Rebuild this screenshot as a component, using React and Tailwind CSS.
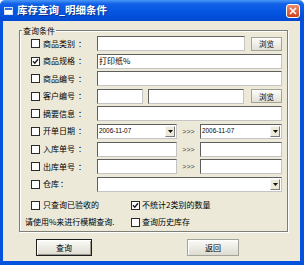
import React from 'react'

function Check({ checked }) {
  return (
    <span className="w-[9px] h-[9px] shrink-0 border border-[#2a2a2a] bg-white flex items-center justify-center">
      {checked && (
        <svg width="7" height="7" viewBox="0 0 7 7">
          <path d="M1 3.2 L2.8 5.2 L6 1.2" stroke="#1a1a1a" strokeWidth="1.4" fill="none" />
        </svg>
      )}
    </span>
  )
}

function Field({ w, text, mono, select }) {
  return (
    <div
      className={`${w} h-[15px] shrink-0 bg-white border border-[#5f5f5f] border-b-[#c4c4c4] border-r-[#c4c4c4] flex items-center pl-[1px] pr-[1px] overflow-hidden`}
    >
      <span
        className={
          mono
            ? "font-['Liberation_Sans',sans-serif] text-[6.4px] leading-none"
            : 'text-[8px] leading-none'
        }
      >
        {text}
      </span>
      {select && (
        <span className="ml-auto w-[10px] h-[11px] bg-[#ece9d8] border border-[#f8f8f8] border-b-[#7a7a7a] border-r-[#7a7a7a] flex items-center justify-center">
          <svg width="5" height="3" viewBox="0 0 5 3">
            <path d="M0 0 H5 L2.5 3 Z" fill="#111" />
          </svg>
        </span>
      )}
    </div>
  )
}

function Browse() {
  return (
    <button className="ml-auto w-[31px] h-[14px] border border-[#a3a39a] bg-gradient-to-b from-[#fdfdfb] to-[#e2e0d5] text-[7.5px] leading-none flex items-center justify-center">
      浏览
    </button>
  )
}

function Row({ label, checked, colon = 'ml-[3px]', children }) {
  return (
    <div className="h-[15px] flex items-center">
      <Check checked={checked} />
      <span className="ml-[3px] w-[54px] shrink-0 flex items-center whitespace-nowrap text-[8px] leading-none">
        {label}
        <span className={colon}>：</span>
      </span>
      {children}
    </div>
  )
}

function Arrows() {
  return (
    <span className="w-[23px] shrink-0 text-center font-['Liberation_Sans',sans-serif] text-[7px] leading-none text-[#444]">
      &gt;&gt;&gt;
    </span>
  )
}

export default function App() {
  return (
    <div className="w-[304px] h-[265px] flex flex-col overflow-hidden text-black font-['Noto_Sans_CJK_SC','Noto_Sans',sans-serif]">
      {/* title bar */}
      <div className="h-[21px] shrink-0 flex items-center pl-[4px] pr-[4px] rounded-t-[5px] bg-[linear-gradient(180deg,#4a98f7_0%,#1262e8_18%,#0456e2_55%,#0349d2_100%)]">
        <svg width="9" height="8" viewBox="0 0 9 8" className="shrink-0">
          <rect x="0.5" y="0.5" width="8" height="7" fill="#fff" stroke="#cfe0ff" />
          <rect x="1" y="1" width="7" height="2" fill="#2f6ed8" />
        </svg>
        <span className="ml-[4px] text-[10.5px] font-bold text-white leading-none [text-shadow:1px_1px_0_#0a2f8a]">
          库存查询_明细条件
        </span>
        <span className="ml-auto w-[14px] h-[14px] rounded-[3px] border border-white bg-gradient-to-b from-[#ec8c6c] to-[#cc3f17] flex items-center justify-center">
          <svg width="8" height="8" viewBox="0 0 8 8">
            <path d="M1 1 L7 7 M7 1 L1 7" stroke="#fff" strokeWidth="1.6" />
          </svg>
        </span>
      </div>

      {/* body */}
      <div className="flex-1 flex flex-col bg-[#ece9d8] border-l-[3px] border-r-[4px] border-b-[4px] border-[#0552df]">
        <fieldset className="ml-[16px] mr-[12px] mt-[5px] h-[206px] p-0 border border-[#7e7e78] shadow-[inset_1px_1px_0_#ffffff,1px_1px_0_#ffffff]">
          <legend className="ml-[2px] px-[1px] text-[8px] leading-[9px]">查询条件</legend>
          <div className="pl-[11px] pr-[5px] pt-[1px] flex flex-col gap-[2.6px]">
            <Row label="商品类别">
              <Field w="w-[148px]" />
              <Browse />
            </Row>
            <Row label="商品规格" checked>
              <Field w="flex-1" text="打印纸%" />
            </Row>
            <Row label="商品编号">
              <Field w="flex-1" />
            </Row>
            <Row label="客户编号">
              <Field w="w-[46px]" />
              <div className="ml-[5px]">
                <Field w="w-[96px]" />
              </div>
              <Browse />
            </Row>
            <Row label="摘要信息">
              <Field w="flex-1" />
            </Row>
            <Row label="开单日期">
              <Field w="w-[80px]" text="2006-11-07" mono select />
              <Arrows />
              <Field w="flex-1" text="2006-11-07" mono select />
            </Row>
            <Row label="入库单号">
              <Field w="w-[80px]" />
              <Arrows />
              <Field w="flex-1" />
            </Row>
            <Row label="出库单号">
              <Field w="w-[80px]" />
              <Arrows />
              <Field w="flex-1" />
            </Row>
            <Row label="仓库" colon="ml-[1px]">
              <Field w="flex-1" select />
            </Row>
          </div>
          <div className="pl-[11px] mt-[7px] grid grid-cols-[100px_1fr] gap-y-[4px] text-[8px] leading-none">
            <div className="h-[13px] flex items-center">
              <Check />
              <span className="ml-[3px]">只查询已验收的</span>
            </div>
            <div className="h-[13px] flex items-center">
              <Check checked />
              <span className="ml-[2px]">不统计2类别的数量</span>
            </div>
            <div className="h-[13px] flex items-center -ml-[6px]">请使用%来进行模糊查询.</div>
            <div className="h-[13px] flex items-center">
              <Check />
              <span className="ml-[2px]">查询历史库存</span>
            </div>
          </div>
        </fieldset>

        <div className="mt-[7px] pl-[33px] flex items-center gap-[95px]">
          <button className="w-[56px] h-[17px] border border-[#1e1e1e] shadow-[inset_1px_1px_0_#fff,inset_-1px_-1px_0_#9c9a8e] bg-gradient-to-b from-[#fbfbf8] to-[#dedcd0] text-[8px] leading-none flex items-center justify-center">
            查询
          </button>
          <button className="w-[52px] h-[17px] border border-[#a3a39a] shadow-[inset_1px_1px_0_#fff] bg-gradient-to-b from-[#fbfbf8] to-[#dedcd0] text-[8px] leading-none flex items-center justify-center">
            返回
          </button>
        </div>
      </div>
    </div>
  )
}
